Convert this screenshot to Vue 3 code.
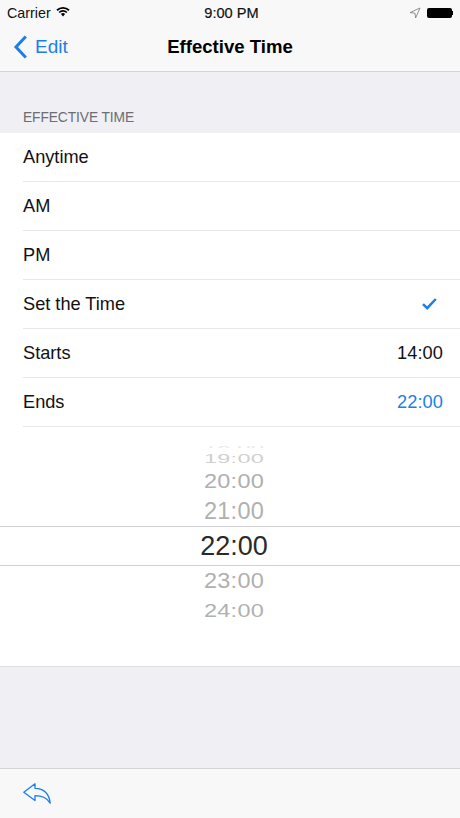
<script setup>
const rows = [
  { label: 'Anytime' },
  { label: 'AM' },
  { label: 'PM' },
  { label: 'Set the Time', check: true },
  { label: 'Starts', value: '14:00' },
  { label: 'Ends', value: '22:00', active: true }
]
</script>

<template>
  <div class="page">
    <header class="nav">
      <div class="status">
        <div class="status-left">
          <span>Carrier</span>
          <svg class="wifi" width="14" height="11" viewBox="0 0 14 11">
            <path d="M0.4 3.6A9.4 9.4 0 0 1 13.6 3.6L12.4 4.9A7.6 7.6 0 0 0 1.6 4.9Z" fill="#000" />
            <path d="M2.6 5.9A6.3 6.3 0 0 1 11.4 5.9L10.2 7.1A4.6 4.6 0 0 0 3.8 7.1Z" fill="#000" />
            <path d="M4.9 8.1A3 3 0 0 1 9.1 8.1L7 10.4Z" fill="#000" />
          </svg>
        </div>
        <span class="clock">9:00 PM</span>
        <div class="status-right">
          <svg width="12" height="12" viewBox="0 0 12 12">
            <path d="M11 1L1 5.6L6 6.2L6.6 11Z" fill="none" stroke="#777" stroke-width="0.8" stroke-linejoin="round" />
          </svg>
          <div class="battery"></div>
          <div class="battery-tip"></div>
        </div>
      </div>
      <div class="nav-bar">
        <div class="back">
          <svg width="15" height="24" viewBox="0 0 15 24">
            <path d="M12.8 1.5L3 12L12.8 22.5" fill="none" stroke="#1a7fe8" stroke-width="3" />
          </svg>
          <span>Edit</span>
        </div>
        <h1>Effective Time</h1>
      </div>
    </header>

    <main class="content">
      <div class="section-title">EFFECTIVE TIME</div>
      <div class="list">
        <div v-for="row in rows" :key="row.label" class="row">
          <span>{{ row.label }}</span>
          <svg v-if="row.check" class="check" width="15" height="12" viewBox="0 0 15 12">
            <path d="M1 6.2L5.2 10.2L13.8 1" fill="none" stroke="#1a7fe8" stroke-width="2.5" />
          </svg>
          <span v-if="row.value" class="value" :class="{ active: row.active }">{{ row.value }}</span>
        </div>
        <div class="picker">
          <div class="clip">
            <div class="tick t18">18:00</div>
            <div class="tick t19">19:00</div>
            <div class="tick t20">20:00</div>
            <div class="tick t21">21:00</div>
          </div>
          <div class="selected">22:00</div>
          <div class="tick t23">23:00</div>
          <div class="tick t24">24:00</div>
        </div>
      </div>
    </main>

    <footer class="toolbar">
      <svg width="28" height="21" viewBox="0 0 28 21">
        <path d="M0.8 9.2L12 0.8V5.4C20 5.6 26 9.5 27.2 20.2C24 14.5 19.5 12.6 12 12.6V17.6Z" fill="none" stroke="#1a7fe8" stroke-width="1.3" stroke-linejoin="round" />
      </svg>
    </footer>
  </div>
</template>

<style scoped>
.page {
  width: 460px;
  height: 818px;
  display: flex;
  flex-direction: column;
  background: #efeff4;
  font-family: "Liberation Sans", Arial, sans-serif;
  color: #111;
  overflow: hidden;
}

.nav {
  height: 72px;
  box-sizing: border-box;
  background: #f8f8f9;
  border-bottom: 1px solid #d4d4d6;
}

.status {
  height: 26px;
  padding: 0 7px;
  display: grid;
  grid-template-columns: 1fr auto 1fr;
  align-items: center;
  font-size: 14.3px;
}

.status-left {
  display: flex;
  align-items: center;
  gap: 5px;
}

.wifi {
  margin-top: -3px;
}

.clock {
  font-size: 14.6px;
  margin-left: 3px;
  -webkit-text-stroke: 0.2px #111;
}

.status-right {
  display: flex;
  align-items: center;
  justify-content: flex-end;
}

.status-right svg {
  margin-right: 6px;
}

.battery {
  width: 25px;
  height: 10px;
  background: #000;
  border-radius: 2px;
}

.battery-tip {
  width: 1.5px;
  height: 4px;
  background: #000;
}

.nav-bar {
  height: 45px;
  padding-bottom: 3px;
  box-sizing: border-box;
  position: relative;
  display: flex;
  align-items: center;
  justify-content: center;
}

.nav-bar h1 {
  margin: 0;
  font-size: 18.6px;
  font-weight: 700;
  color: #000;
}

.back {
  position: absolute;
  left: 13px;
  top: 9px;
  display: flex;
  align-items: center;
  gap: 7px;
  font-size: 19px;
  color: #1a7fe8;
}

.content {
  flex: 1;
}

.section-title {
  height: 61px;
  box-sizing: border-box;
  padding: 37px 23px 0;
  font-size: 13.8px;
  letter-spacing: -0.1px;
  line-height: 17px;
  color: #6d6d72;
}

.list {
  background: #fff;
  border-bottom: 1px solid #dfdfe2;
}

.row {
  height: 49px;
  box-sizing: border-box;
  margin-left: 23px;
  padding: 0 17px 0 0;
  display: flex;
  align-items: center;
  justify-content: space-between;
  border-bottom: 1px solid #e8e8ea;
  font-size: 18.2px;
}

.value {
  letter-spacing: 0.1px;
}

.check {
  margin-right: 6px;
}

.active {
  color: #1a7fe8;
}

.picker {
  height: 239px;
  box-sizing: border-box;
  padding-top: 18px;
  display: flex;
  flex-direction: column;
  align-items: center;
}

.clip {
  height: 81px;
  overflow: hidden;
  flex: none;
}

.tick {
  padding-left: 8px;
  font-size: 23.5px;
  letter-spacing: 0.25px;
  color: #b0b0b0;
  line-height: 30px;
  height: 30px;
  flex: none;
}

.t18 {
  height: 4px;
  margin-bottom: 3px;
  line-height: 4px;
  overflow: hidden;
  color: #e2e2e2;
  transform: scaleY(0.35);
}

.t19 {
  height: 14px;
  line-height: 14px;
  color: #d0d0d0;
  transform: scaleY(0.56);
}

.t20 {
  transform: scaleY(0.83);
}

.t23 {
  transform: scaleY(0.93);
}

.t24 {
  transform: scaleY(0.77);
}

.selected {
  align-self: stretch;
  flex: none;
  height: 40px;
  box-sizing: border-box;
  padding-left: 8px;
  border-top: 1px solid #d2d2d4;
  border-bottom: 1px solid #d2d2d4;
  text-align: center;
  font-size: 27px;
  line-height: 38px;
  color: #2a2a2a;
}

.toolbar {
  height: 50px;
  box-sizing: border-box;
  padding: 14px 0 0 23px;
  background: #f8f8f9;
  border-top: 1px solid #d4d4d6;
}
</style>

<style>
body {
  margin: 0;
}
</style>
